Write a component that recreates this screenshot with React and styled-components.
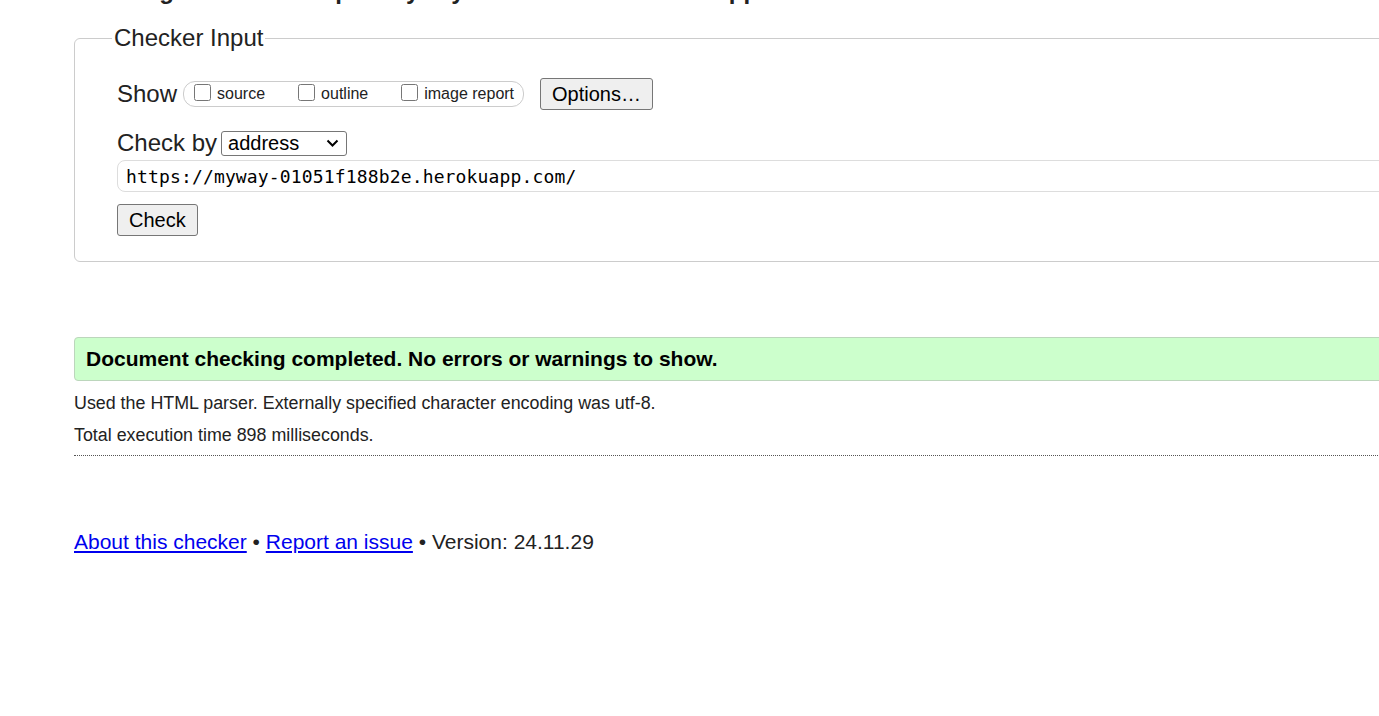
import React from "react";
import styled, { createGlobalStyle } from "styled-components";

const GlobalStyle = createGlobalStyle`
	html, body {
		margin: 0;
		padding: 0;
		overflow: hidden;
		background: #fff;
	}
	body {
		font-family: "Liberation Sans", Arial, sans-serif;
		color: #222;
	}
`;

const Page = styled.div`
	width: 1500px;
	padding-left: 74px;
	box-sizing: border-box;
`;

const Heading = styled.h2`
	margin: -23px 0 19px;
	font-size: 24px;
	font-weight: bold;
	line-height: 28px;
	color: #222;
	white-space: nowrap;
`;

const Fieldset = styled.fieldset`
	margin: 0;
	padding: 6px 0 25px 42px;
	border: 1px solid #ccc;
	border-radius: 6px;
	min-width: 0;
`;

const Legend = styled.legend`
	font-size: 24px;
	padding: 0 2px;
	margin-left: -5px;
	color: #222;
`;

const Row = styled.div`
	display: flex;
	align-items: center;
	margin-top: ${(p) => p.$top || 0}px;
`;

const Label = styled.span`
	font-size: 24px;
	line-height: 28px;
	margin-right: ${(p) => p.$gap || 6}px;
`;

const Pill = styled.div`
	display: flex;
	align-items: center;
	gap: 33px;
	height: 26px;
	padding: 0 9px 0 10px;
	border: 1px solid #ccc;
	border-radius: 12px;
	box-sizing: border-box;
`;

const Option = styled.label`
	display: flex;
	align-items: center;
	gap: 6px;
	font-size: 16px;
	line-height: 18px;

	input {
		margin: 0;
		width: 17px;
		height: 17px;
		position: relative;
		top: -2px;
	}
`;

const Button = styled.button`
	font-family: "Liberation Sans", Arial, sans-serif;
	font-size: 20px;
	height: 32px;
	padding: 0 ${(p) => p.$pad || 11}px;
	margin-left: ${(p) => p.$left || 0}px;
	background: #efefef;
	color: #000;
	border: 1px solid #767676;
	border-radius: 3px;
`;

const SelectWrap = styled.div`
	position: relative;
	display: inline-flex;

	svg {
		position: absolute;
		right: 8px;
		top: 8px;
		pointer-events: none;
	}
`;

const Select = styled.select`
	appearance: none;
	font-family: "Liberation Sans", Arial, sans-serif;
	font-size: 20px;
	width: 126px;
	height: 25px;
	padding: 0 0 0 6px;
	background: #fff;
	color: #000;
	border: 1px solid #767676;
	border-radius: 3px;
`;

const UrlInput = styled.input`
	display: block;
	width: 1400px;
	height: 32px;
	margin-top: 3px;
	padding: 0 8px;
	box-sizing: border-box;
	font-family: "DejaVu Sans Mono", "Liberation Mono", monospace;
	font-size: 18px;
	letter-spacing: 0.15px;
	color: #000;
	border: 1px solid #ddd;
	border-radius: 8px;
	outline: none;
`;

const Success = styled.div`
	margin-top: 75px;
	padding: 0 11px;
	height: 44px;
	display: flex;
	align-items: center;
	box-sizing: border-box;
	background: #ccffcc;
	border: 1px solid #bcd6bc;
	border-radius: 4px;
	font-size: 21px;
	font-weight: bold;
	color: #000;
`;

const Note = styled.p`
	margin: ${(p) => p.$top || 0}px 0 0;
	font-size: 17.85px;
	line-height: 20px;
	color: #222;
`;

const Rule = styled.hr`
	margin: 10px 0 0;
	border: 0;
	border-top: 1px dotted #555;
`;

const Footer = styled.p`
	margin: 74px 0 0;
	font-size: 21px;
	line-height: 24px;
	color: #222;

	a {
		color: #0000ee;
		text-decoration: underline;
	}
`;

export default function App() {
	return (
		<Page>
			<GlobalStyle />
			<Heading>Showing results for https://myway-01051f188b2e.herokuapp.com/</Heading>
			<Fieldset>
				<Legend>Checker Input</Legend>
				<Row $top={20}>
					<Label $gap={6}>Show</Label>
					<Pill>
						<Option>
							<input type="checkbox" />
							source
						</Option>
						<Option>
							<input type="checkbox" />
							outline
						</Option>
						<Option>
							<input type="checkbox" />
							image report
						</Option>
					</Pill>
					<Button $left={16} $pad={11}>Options…</Button>
				</Row>
				<Row $top={19}>
					<Label $gap={4}>Check by</Label>
					<SelectWrap>
						<Select defaultValue="address">
							<option value="address">address</option>
							<option value="upload">file upload</option>
							<option value="text">text input</option>
						</Select>
						<svg width="13" height="9" viewBox="0 0 13 9">
							<path d="M1.5 1.5 L6.5 6.5 L11.5 1.5" fill="none" stroke="#000" strokeWidth="2" />
						</svg>
					</SelectWrap>
				</Row>
				<UrlInput defaultValue="https://myway-01051f188b2e.herokuapp.com/" />
				<Row $top={12}>
					<Button $pad={11}>Check</Button>
				</Row>
			</Fieldset>
			<Success>Document checking completed. No errors or warnings to show.</Success>
			<Note $top={12}>Used the HTML parser. Externally specified character encoding was utf-8.</Note>
			<Note $top={12}>Total execution time 898 milliseconds.</Note>
			<Rule />
			<Footer>
				<a href="#about">About this checker</a> • <a href="#issue">Report an issue</a> • Version: 24.11.29
			</Footer>
		</Page>
	);
}
